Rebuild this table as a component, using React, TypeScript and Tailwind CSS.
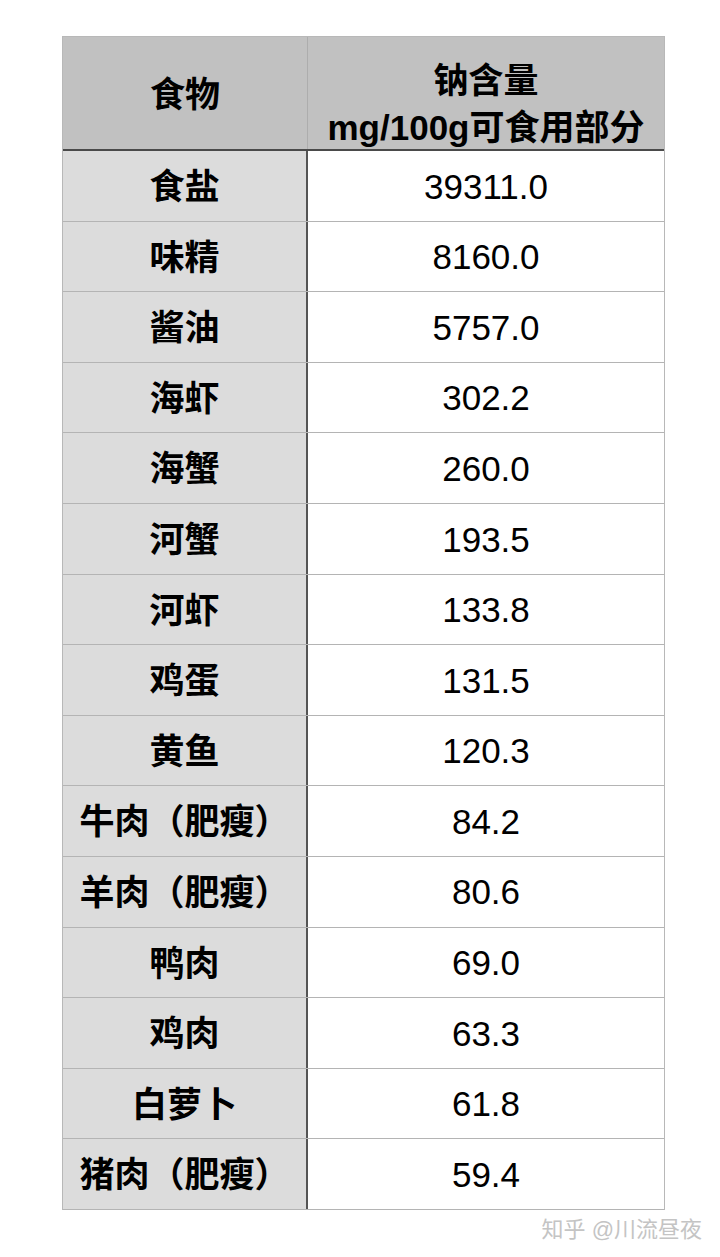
const rows: [string, string][] = [
  ["食盐", "39311.0"],
  ["味精", "8160.0"],
  ["酱油", "5757.0"],
  ["海虾", "302.2"],
  ["海蟹", "260.0"],
  ["河蟹", "193.5"],
  ["河虾", "133.8"],
  ["鸡蛋", "131.5"],
  ["黄鱼", "120.3"],
  ["牛肉（肥瘦）", "84.2"],
  ["羊肉（肥瘦）", "80.6"],
  ["鸭肉", "69.0"],
  ["鸡肉", "63.3"],
  ["白萝卜", "61.8"],
  ["猪肉（肥瘦）", "59.4"],
];

export default function App() {
  return (
    <div
      className="w-[720px] h-[1257px] bg-white pt-[36px] pl-[62px] text-black"
      style={{ fontFamily: '"Liberation Sans", "Noto Sans CJK SC", sans-serif' }}
    >
      <div className="w-[603px] border-l border-r border-t border-[#b8b8b8]">
        {/* header */}
        <div className="flex h-[114px] bg-[#c1c1c1] border-b-2 border-[#4a4a4a]">
          <div className="w-[245px] flex items-center justify-center pt-[4px] border-r border-[#adadad] text-[35px] font-bold">
            食物
          </div>
          <div className="flex-1 flex flex-col items-center justify-center pt-[22px] text-[35px] font-bold leading-[47px]">
            <span>钠含量</span>
            <span>mg/100g可食用部分</span>
          </div>
        </div>
        {rows.map(([food, value]) => (
          <div key={food} className="flex h-[70.6px] border-b border-[#b4b4b4]">
            <div className="w-[245px] bg-[#dcdcdc] border-r-2 border-[#555555] flex items-center justify-center pt-[3px] text-[35px] font-bold">
              {food}
            </div>
            <div className="flex-1 flex items-center justify-center pt-[2px] text-[35px]">
              {value}
            </div>
          </div>
        ))}
      </div>
      <div className="w-[640px] flex justify-end pt-[3px] text-[22px] text-[#c4c4c4]">
        知乎 @川流昼夜
      </div>
    </div>
  );
}
